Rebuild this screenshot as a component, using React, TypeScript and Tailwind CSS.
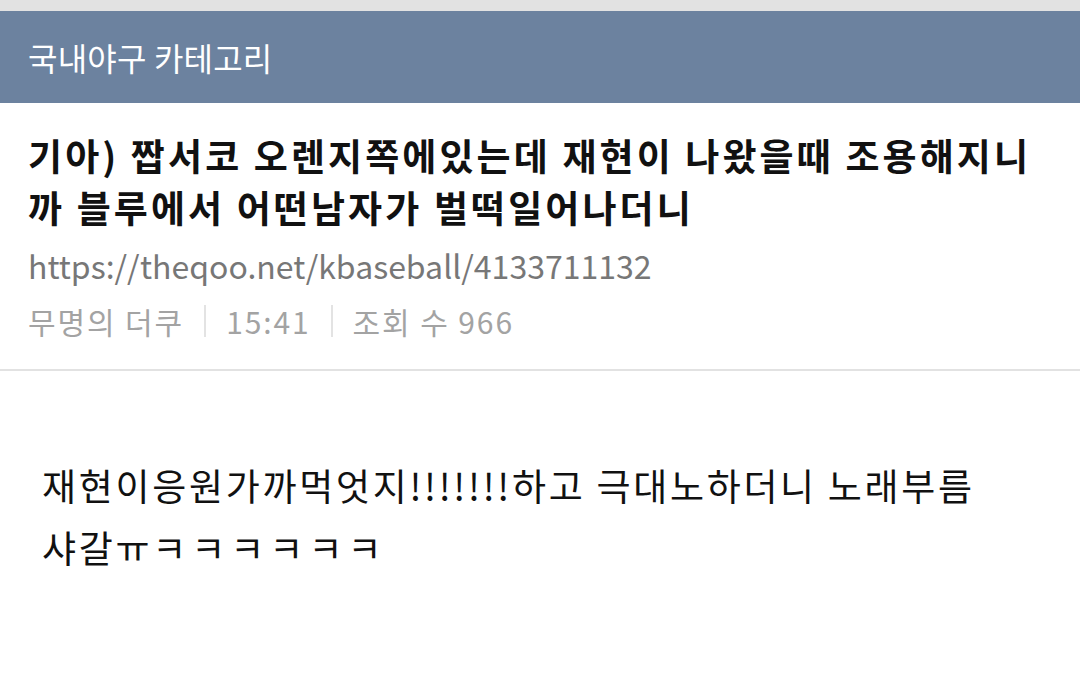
import React from "react";

const font = { fontFamily: '"Noto Sans CJK KR", "Noto Sans", sans-serif' };

export default function App() {
  return (
    <div className="w-[1080px] h-[685px] bg-white overflow-hidden" style={font}>
      <div className="h-[11px] bg-[#e2e2e2]" />
      <div className="h-[92px] bg-[#6c829f] flex items-center px-[28px]">
        <span className="text-white text-[32px] leading-none tracking-[0.2px]">국내야구 카테고리</span>
      </div>
      <div className="pl-[28px] pr-[24px] pt-[26px] border-b-2 border-[#e2e2e2] pb-[26px]">
        <h1 className="text-[37px] font-bold leading-[52px] text-[#111] tracking-[3.1px] break-all">
          기아) 짭서코 오렌지쪽에있는데 재현이 나왔을때 조용해지니까 블루에서 어떤남자가 벌떡일어나더니
        </h1>
        <div className="text-[32px] text-[#777] mt-[10px] leading-[44px]">https://theqoo.net/kbaseball/4133711132</div>
        <div className="text-[30px] text-[#a3a3a3] mt-[12px] leading-[44px] flex items-center tracking-[1.9px]">
          <span>무명의 더쿠</span>
          <span className="mx-[20px] w-[2px] h-[32px] bg-[#e3e3e3]" />
          <span>15:41</span>
          <span className="mx-[20px] w-[2px] h-[32px] bg-[#e3e3e3]" />
          <span>조회 수 966</span>
        </div>
      </div>
      <div className="px-[42px] pt-[83px] text-[37px] leading-[62px] text-[#111] tracking-[2.7px]">
        재현이응원가까먹엇지!!!!!!!하고 극대노하더니 노래부름
        <br />
        샤갈ㅠ<span className="tracking-[5px]">ㅋㅋㅋㅋㅋㅋ</span>
      </div>
    </div>
  );
}
